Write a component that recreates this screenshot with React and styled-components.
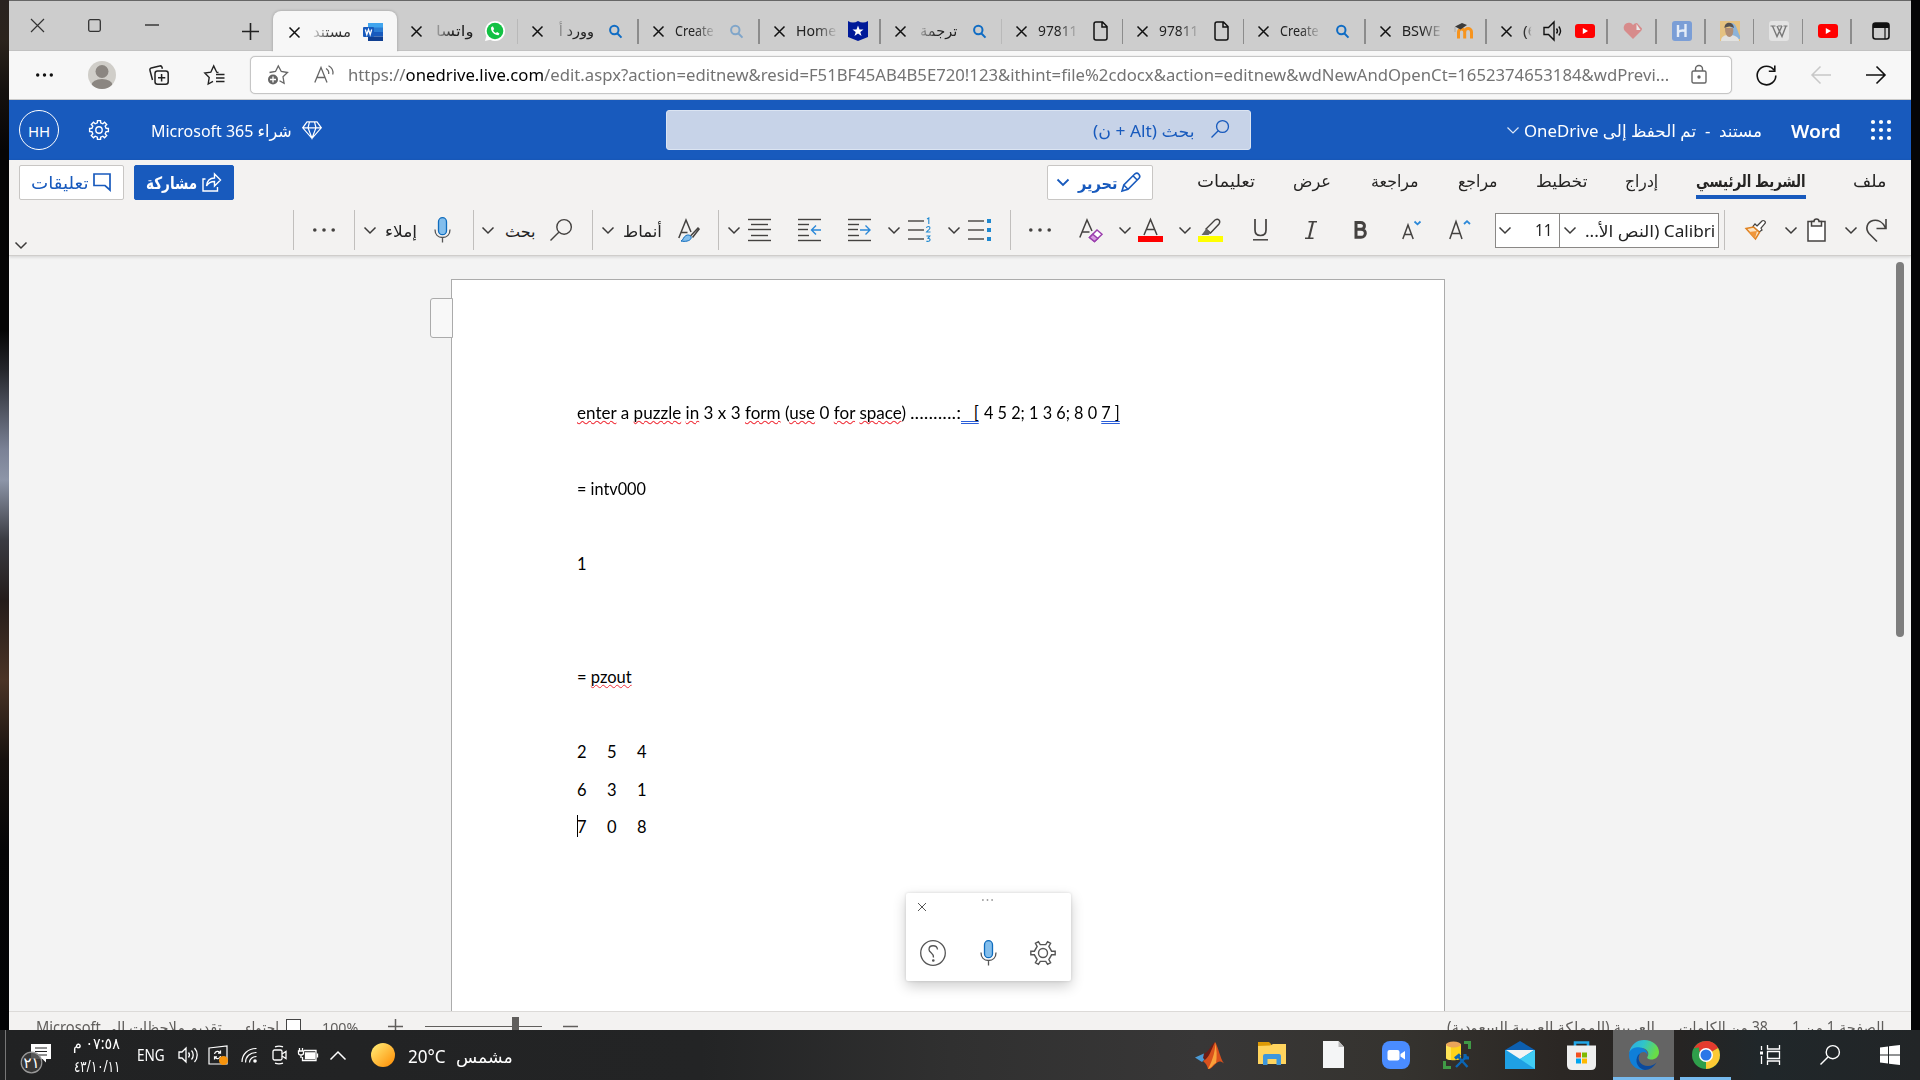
import React, { useLayoutEffect, useRef, useState } from "react";
import styled, { createGlobalStyle, css } from "styled-components";

const UI = `"Noto Sans", "Open Sans", "DejaVu Sans", sans-serif`;
const BLUE = "#185abd";

const Global = createGlobalStyle`
  * { box-sizing: border-box; }
  html, body { margin: 0; padding: 0; background: #000; overflow: hidden; }
  body { width: 1920px; height: 1080px; font-family: ${UI}; font-size: 15px; color: #222; }
`;

/* ---------- text that condenses to its column ---------- */
const FitBox = styled.span`
  display: block;
  flex: none;
  direction: ltr;
  text-align: left;
  width: ${(p) => p.$w}px;
  margin-left: ${(p) => p.$g || 0}px;
  margin-top: ${(p) => p.$dy || 0}px;
  height: ${(p) => p.$s * 1.5}px;
  line-height: ${(p) => p.$s * 1.5}px;
  font-size: ${(p) => p.$s}px;
  font-weight: ${(p) => p.$b || 400};
  font-family: ${(p) => p.$f || UI};
  color: ${(p) => p.$c || "inherit"};
  white-space: pre;
`;
const FitInner = styled.span`
  display: inline-block;
  transform-origin: 0 50%;
`;
function Fit({ w, g, dy, s = 15, b, c, f, rtl, children }) {
  const ref = useRef(null);
  const [k, setK] = useState(1);
  useLayoutEffect(() => {
    if (ref.current) setK(w / ref.current.offsetWidth);
  }, [w]);
  return (
    <FitBox $w={w} $g={g} $dy={dy} $s={s} $b={b} $c={c} $f={f}>
      <FitInner ref={ref} dir={rtl ? "rtl" : "ltr"} style={{ transform: `scaleX(${k})` }}>{children}</FitInner>
    </FitBox>
  );
}

/* ---------- icons ---------- */
const Svg = styled.svg`
  display: block;
  flex: none;
  overflow: visible;
  margin-left: ${(p) => p.$g || 0}px;
  margin-top: ${(p) => p.$dy || 0}px;
  opacity: ${(p) => p.$o || 1};
`;
const Ic = ({ w, h, g, dy, o, c = "#222", sw = 1.4, children }) => (
  <Svg width={w} height={h} viewBox={`0 0 ${w} ${h}`} $g={g} $dy={dy} $o={o} fill="none" stroke={c} strokeWidth={sw}>
    {children}
  </Svg>
);
const gear = (cx, cy, n, ro, ri, a = 0.3, off = 0) => {
  let d = "";
  for (let i = 0; i < n; i++) {
    const t = (i / n) * Math.PI * 2 + off;
    const st = (Math.PI * 2) / n;
    [[-a * 0.8, ro], [a * 0.8, ro], [a * 1.15, ri], [1 - a * 1.15, ri]].forEach(([f, r]) => {
      const q = t + f * st * 0.85 + (f > 0.5 ? st * 0.15 : 0);
      d += `${d ? "L" : "M"}${(cx + r * Math.cos(q)).toFixed(2)} ${(cy + r * Math.sin(q)).toFixed(2)}`;
    });
  }
  return d + "Z";
};
const Cross = (p) => <Ic w={11} h={11} sw={1.5} c="#111" {...p}><path d="M.5.5l10 10M10.500.5l-10 10" /></Ic>;
const Chev = (p) => <Ic w={12} h={7} c="#3b3a39" sw={1.5} {...p}><path d="M.5.5L6 6l5.500-5.500" /></Ic>;
const Dots = ({ n = 22, r = 1.8, ...p }) => (
  <Ic w={n} h={4} {...p}><g fill={p.c || "#333"} stroke="none"><circle cx={r} cy="2" r={r} /><circle cx={n / 2} cy="2" r={r} /><circle cx={n - r} cy="2" r={r} /></g></Ic>
);
const Lens = (p) => <Ic w={13} h={13} c="#0f6cc4" sw={2} {...p}><circle cx="5.300" cy="5" r="4.200" /><path d="M8.200 8.200L12.500 12.600" /></Ic>;
const Find = ({ k = 20, ...p }) => (
  <Ic w={k} h={k} {...p}><circle cx={k * 0.64} cy={k * 0.36} r={k * 0.33} /><path d={`M${k * 0.4} ${k * 0.6}L.5 ${k - 0.5}`} /></Ic>
);
const Mic = (p) => (
  <Ic w={17} h={26} c="#555" sw={1.3} {...p}>
    <rect x="4.500" y=".7" width="8" height="17" rx="4" fill="#83beec" stroke="#0f6cbd" />
    <path d="M1 12.500c0 5 3 8 7.500 8s7.500-3 7.500-8M8.500 20.500v5" />
  </Ic>
);
const YT = (p) => <Ic w={20} h={14} {...p}><rect width="20" height="14" rx="3" fill="#f00" stroke="none" /><path d="M7.800 4l5.200 3-5.200 3z" fill="#fff" stroke="none" /></Ic>;
const Doc = (p) => <Ic w={15} h={20} c="#111" sw={1.5} {...p}><path d="M1 3a2 2 0 012-2h6.500l4.500 4.500V17a2 2 0 01-2 2H3a2 2 0 01-2-2zM9 1v5h5" /></Ic>;
const WordIcon = (p) => (
  <Ic w={20} h={18} {...p}>
    <g stroke="none"><path d="M5 0h15v5H5z" fill="#41a5ee" /><path d="M5 4.500h15V9H5z" fill="#2b7cd3" /><path d="M5 9h15v4.500H5z" fill="#185abd" /><path d="M5 13.500h15V18H5z" fill="#103f91" /><rect y="4" width="11" height="10" rx="1" fill="#185abd" /></g>
    <path d="M2.300 6.500l1.500 5 1.700-5 1.700 5 1.500-5" stroke="#fff" strokeWidth="1.300" />
  </Ic>
);
const WhatsApp = (p) => (
  <Ic w={20} h={20} {...p}>
    <path d="M0 20l1.400-5A10 10 0 1110 20a9.500 9.500 0 01-4.800-1.200z" fill="#fff" stroke="none" />
    <circle cx="10" cy="10" r="8.300" fill="#12c143" stroke="none" />
    <path d="M6 7c0 4 3.500 7 7.500 7.300l1-1.800-2.400-1.400-1.200 1c-1.300-.6-2.200-1.500-2.700-2.800l1-1.200L8 5.500c-1.200 0-2 .6-2 1.500z" fill="#fff" stroke="none" />
  </Ic>
);
const Shield = (p) => (
  <Ic w={20} h={20} {...p}><path d="M0 0q5 3 10 0 5 3 10 0v16l-10 4-10-4z" fill="#001a99" stroke="none" /><path d="M10 4.500l1.500 4h4l-3.200 2.500 1.200 4-3.500-2.400L6.500 15l1.200-4L4.500 8.500h4z" fill="#fff" stroke="none" /></Ic>
);
const Moodle = (p) => (
  <Ic w={20} h={16} {...p}><path d="M4.500 15.500V9a3 3 0 016.200 0v6.500M10.700 9a3.300 3.300 0 016.800 0v6.500" stroke="#f7941e" strokeWidth="3" /><path d="M1 3.500L8 0l5 2-6.500 4.500z" fill="#3a3a3a" stroke="none" /><path d="M1 4v5" stroke="#aaa" strokeWidth="1" /></Ic>
);

/* ---------- frame ---------- */
const Screen = styled.div`
  width: 1920px; height: 1080px; display: flex; flex-direction: column; overflow: hidden;
`;
const Stage = styled.div`display: flex; height: 1030px; flex: none;`;
const Strip = styled.div`
  width: 9px; flex: none;
  background: ${(p) => p.$right
    ? "#050506"
    : "linear-gradient(#2a2320 0, #2b231c 40px, #15110e 90px, #060505 150px, #050505 330px, #25272c 370px, #7b8296 450px, #8d95a8 480px, #3a3b42 540px, #241c1a 600px, #4b3426 680px, #17110e 760px, #050506 850px, #020305 1030px)"};
`;
const Win = styled.main`width: 1902px; flex: none; display: flex; flex-direction: column; background: #f3f3f3;`;

/* ---------- browser chrome ---------- */
const TabBar = styled.div`
  height: 51px; flex: none; display: flex; align-items: center;
  padding-top: 11px; background: #cdcdcd; border-top: 1px solid #666; border-bottom: 1px solid #c2c2c2;
`;
const Tab = styled.div`
  flex: none; height: 40px; display: flex; align-items: center; position: relative;
  width: ${(p) => p.$w || 121.15}px;
  padding-left: ${(p) => (p.$pl === undefined ? 14 : p.$pl)}px;
  ${(p) => p.$active
    ? css`margin-left: 14px; margin-right: -0.5px; margin-bottom: -1px; height: 41px; background: #f7f7f7; border-radius: 8px 8px 0 0; box-shadow: 0 0 3px rgba(0,0,0,.25); clip-path: inset(-4px -4px 0 -4px);`
    : css`&::after { content: ""; position: absolute; right: 0; top: 8px; height: 25px; width: ${p.$thin ? 1 : 1.6}px; background: ${p.$thin ? "#b9b9b9" : "#8c8c8c"}; }`}
`;
const Fade = styled.div`
  width: ${(p) => p.$w || 40}px; margin-left: 11px; flex: none; height: 28px; display: flex; align-items: center;
  justify-content: ${(p) => (p.$rtl ? "flex-end" : "flex-start")};
  -webkit-mask-image: linear-gradient(to ${(p) => (p.$rtl ? "left" : "right")}, #000 ${(p) => p.$from || "50%"}, transparent ${(p) => p.$to || "105%"});
  mask-image: linear-gradient(to ${(p) => (p.$rtl ? "left" : "right")}, #000 ${(p) => p.$from || "50%"}, transparent ${(p) => p.$to || "105%"});
`;
const FavSlot = styled.div`width: 22px; margin-left: 11px; flex: none; display: flex; justify-content: center;`;
const AddressRow = styled.div`
  height: 49px; flex: none; display: flex; align-items: center; background: #f7f7f7; border-bottom: 1px solid #c9c9c9;
`;
const AddressBox = styled.div`
  width: 1482px; height: 38px; margin-left: 25px; flex: none; display: flex; align-items: center;
  background: #fff; border: 1px solid #c6c6c6; border-radius: 5px; box-shadow: 0 0 1px #bbb;
`;
const Avatar = styled.div`
  width: 28px; height: 28px; margin-left: 35px; border-radius: 50%; background: #d0cec9; overflow: hidden; flex: none;
`;
const Host = styled.span`color: #000;`;

function BrowserTab({ label, w, rtl, icon, thin, active }) {
  return (
    <Tab $active={active} $w={active ? 124 : undefined} $pl={active ? 16 : undefined} $thin={thin}>
      <Cross dy={1} />
      <Fade $rtl={rtl}><Fit w={w} s={14.5} rtl={rtl} c={active ? "#333" : "#222"} dy={rtl ? 0 : -1}>{label}</Fit></Fade>
      <FavSlot>{icon}</FavSlot>
    </Tab>
  );
}
const tabs = [
  { label: "واتسا", w: 37, rtl: true, icon: <WhatsApp />, thin: true },
  { label: "وورد أ", w: 35, rtl: true, icon: <Lens /> },
  { label: "Create", w: 39, icon: <Lens o={0.4} /> },
  { label: "Home", w: 40, icon: <Shield /> },
  { label: "ترجمة", w: 37, rtl: true, icon: <Lens />, thin: true },
  { label: "97811", w: 39, icon: <Doc /> },
  { label: "97811", w: 39, icon: <Doc /> },
  { label: "Create", w: 39, icon: <Lens /> },
  { label: "BSWE", w: 39, icon: <Moodle /> },
];

function Browser() {
  return (
    <>
      <TabBar>
        <Ic g={22} dy={-11} w={13} h={13} c="#333" sw={1.2}><path d="M0 0l13 13M13 0L0 13" /></Ic>
        <Ic g={44} dy={-11} w={13} h={13} c="#333" sw={1.3}><rect x=".7" y=".7" width="11.600" height="11.600" rx="1.500" /></Ic>
        <Ic g={44} dy={-11} w={14} h={13} c="#222" sw={1.3}><path d="M0 6h14" /></Ic>
        <Ic g={83} w={17} h={17} c="#222" sw={1.6}><path d="M0 8.500h17M8.500 0v17" /></Ic>
        <BrowserTab active label="مستند" w={38} rtl icon={<WordIcon />} />
        {tabs.map((t, i) => <BrowserTab key={i} {...t} />)}
        <Tab $w={121.15}>
          <Cross dy={1} />
          <Fade $w={14} $from="25%" $to="62%"><Fit w={14} s={14.5} dy={-1} c="#333">(6</Fit></Fade>
          <Ic g={6} w={20} h={20} c="#111" sw={1.4}><path d="M1 6.500h4.500L11 1v18l-5.500-5.500H1zM13.500 7.500c1.200 1.500 1.200 3.500 0 5M15.800 5.500c2 2.600 2 6.400 0 9" /></Ic>
          <YT g={12} />
        </Tab>
        <Tab $w={48.8} $pl={15}><Ic w={20} h={18} o={0.55}><path d="M10 17L1.500 8.500A5 5 0 1110 3a5 5 0 014-2l5 5.500q0 1.500-1 2.500z" fill="#e05656" stroke="none" /><path d="M13.500 2v6h4z" fill="#fff" stroke="none" /></Ic></Tab>
        <Tab $w={48.8} $pl={15}><Ic w={20} h={20}><rect width="20" height="20" rx="3" fill="#7b9ed6" stroke="none" /><path d="M6 4v12M13.500 3v13M6 11c3-2 5-2 7.500-1" stroke="#e4ecf7" strokeWidth="2.400" /></Ic></Tab>
        <Tab $w={48.8} $pl={14}><Ic w={20} h={20}><g stroke="none"><rect width="20" height="20" fill="#e5c281" /><path d="M11 2c6 0 6 8 9 13v3H10z" fill="#8cb3d8" /><path d="M1 20c0-5 4-6 8-6s10 1 10 6z" fill="#e2e2e0" /><path d="M5 7c0 6 2 9 4.500 9S14 12 13 7z" fill="#b18f76" /><path d="M4.500 7c0-7 9-7 9.500 0-3-2-6-2-9.500 0z" fill="#555250" /></g></Ic></Tab>
        <Tab $w={48.8} $pl={14.5}><Ic w={20} h={20}><rect width="20" height="20" rx="3" fill="#e3e3e3" stroke="none" /><path d="M1.500 5h5M9 5h4M14.500 5h4" stroke="#777" strokeWidth="1" /><path d="M3.500 5l4.500 10.500 5-10.500M8 5l5 10.500 4-10.500" stroke="#777" strokeWidth="1.400" /></Ic></Tab>
        <Tab $w={48.8} $pl={14.5}><YT /></Tab>
        <Ic g={20} w={18} h={18} c="#111" sw={1.6}><rect x="1" y="1" width="16" height="16" rx="2.500" /><path d="M1 3.500h16" strokeWidth="5" /><path d="M13 5v12" strokeWidth="1.200" /></Ic>
      </TabBar>
      <AddressRow>
        <Dots g={27} n={17} r={1.7} c="#111" />
        <Avatar><Ic w={28} h={28}><g fill="#8b8681" stroke="none"><circle cx="14" cy="10.500" r="6.500" /><ellipse cx="14" cy="24" rx="10.500" ry="6" /></g></Ic></Avatar>
        <Ic g={33} w={20} h={20} c="#222" sw={1.5}><rect x="6" y="6" width="13.200" height="13.200" rx="2.500" /><path d="M12.600 9v7.400M9 12.700h7.300M3.500 15L1 5.500a2 2 0 011.300-2.600L10.500 1a2 2 0 012.500 1.300l.4 1.500" /></Ic>
        <Ic g={35} w={21} h={20} c="#222" sw={1.4}><path d="M14.500 7.500l-1.800-.3L9.700 1 6.800 7.200.8 8.100l4.400 4.500-1 6.400L9 16.300M12 9.500h8.500M12 13h8.500M12 16.500h8.500" /></Ic>
        <AddressBox>
          <Ic g={16} w={22} h={20} c="#666" sw={1.3}><path d="M2.500 7.500l6-1L11.300 1l3 5.500 6.200 1-4.500 4.300 1.100 6.500-4.600-2.500" /><circle cx="6" cy="14.500" r="5" fill="#666" stroke="none" /><path d="M6 11.500v6M3 14.500h6" stroke="#fff" /></Ic>
          <Ic g={25} w={20} h={18} dy={-2} c="#666" sw={1.3}><path d="M.8 17.500L7 2.500l6 15M3 12.500h8M12 3.500c2 1.200 3 3.200 2.700 5.500M14.500.8c3.300 1.800 5 5 4.300 8.700" /></Ic>
          <Fit g={14} w={1321} s={17} dy={-1} c="#737373">https://<Host>onedrive.live.com</Host>/edit.aspx?action=editnew&amp;resid=F51BF45AB4B5E720!123&amp;ithint=file%2cdocx&amp;action=editnew&amp;wdNewAndOpenCt=1652374653184&amp;wdPrevi...</Fit>
          <Ic g={22} w={16} h={19} dy={-2} c="#666" sw={1.4}><rect x="1" y="6" width="14" height="12" rx="1.500" /><path d="M4.500 6V4a3.500 3.500 0 017 0v2" /><circle cx="8" cy="12" r="1" fill="#666" /></Ic>
        </AddressBox>
        <Ic g={24} w={21} h={21} c="#111" sw={1.6}><path d="M19.800 10.500A9.300 9.300 0 1118 5M18.800.5v5.800h-6" /></Ic>
        <Ic g={34} w={20} h={18} c="#c8c8c8" sw={1.5}><path d="M20 9H1M9.500.5L1 9l8.500 8.500" /></Ic>
        <Ic g={35} w={20} h={18} c="#111" sw={1.6}><path d="M0 9h19M10.500.5L19 9l-8.500 8.500" /></Ic>
      </AddressRow>
    </>
  );
}

/* ---------- Word header ---------- */
const Header = styled.header`height: 60px; flex: none; display: flex; align-items: center; background: ${BLUE}; color: #fff;`;
const Initials = styled.div`
  width: 40px; height: 40px; margin-left: 10px; flex: none; border: 1px solid #fff; border-radius: 50%;
  display: flex; align-items: center; justify-content: center; padding-top: 3px;
`;
const SearchBox = styled.div`
  width: 585px; height: 40px; margin-left: 344px; flex: none; display: flex; align-items: center;
  background: #c7d3e8; border: 1px solid #dbe4f2; border-radius: 3px; color: ${BLUE};
`;
function WordHeader() {
  return (
    <Header>
      <Initials><Fit w={22} s={15}>HH</Fit></Initials>
      <Ic g={30} w={20} h={20} c="#fff" sw={1.4}><path d={gear(10, 10, 8, 9.5, 7.3)} /><circle cx="10" cy="10" r="3.200" /></Ic>
      <Fit g={42} w={141} s={17} dy={2} rtl>شراء Microsoft 365</Fit>
      <Ic g={10} w={20} h={18} c="#fff" sw={1.2}><path d="M5 .8h10l4.300 6L10 17.300.7 6.800zM.7 6.800h18.600M7.500.8L6 6.800l4 10.500 4-10.500-1.500-6" /></Ic>
      <SearchBox>
        <Fit g={426} w={102} s={16} dy={2} rtl>بحث (Alt + ن)</Fit>
        <Find k={18} g={16} dy={-2} c={BLUE} sw={1.3} />
      </SearchBox>
      <Chev g={256} w={10} h={6} c="#dfe8f6" sw={1.2} />
      <Fit g={7} w={238} s={16.5} dy={2} rtl>{"مستند  -  تم الحفظ إلى OneDrive"}</Fit>
      <Fit g={29} w={50} s={18.5} dy={2} b={600}>Word</Fit>
      <Ic g={30} w={20} h={20}><g fill="#fff" stroke="none">{[2, 10, 18].map((x) => [2, 10, 18].map((y) => <circle key={x + "-" + y} cx={x} cy={y} r="2.100" />))}</g></Ic>
    </Header>
  );
}

/* ---------- ribbon ---------- */
const Ribbon = styled.section`height: 96px; flex: none; background: #f3f2f1; border-bottom: 1px solid #cfcdcb; box-shadow: 0 1px 3px rgba(0,0,0,.14); position: relative; z-index: 1;`;
const RibbonTabs = styled.nav`height: 45px; display: flex; align-items: center;`;
const Commands = styled.div`height: 50px; display: flex; align-items: center;`;
const PillButton = styled.button`
  height: 35px; width: ${(p) => p.$w}px; margin-left: ${(p) => p.$g}px; padding: 0 0 0 ${(p) => p.$pl}px; flex: none;
  display: flex; align-items: center; border-radius: 2px;
  border: 1px solid ${(p) => (p.$solid ? BLUE : "#c8c6c4")};
  background: ${(p) => (p.$solid ? BLUE : "#fff")};
  color: ${(p) => (p.$solid ? "#fff" : BLUE)};
`;
const RibbonTab = styled.div`
  position: relative; flex: none; margin-left: ${(p) => p.$g}px; height: 45px; display: flex; align-items: center; color: #252423;
  ${(p) => p.$on && css`&::after { content: ""; position: absolute; left: 0; right: 0; top: 35px; height: 4px; background: ${BLUE}; }`}
`;
const Sep = styled.i`width: 1px; height: 40px; flex: none; background: #c1bfbd; margin-left: ${(p) => p.$g}px;`;
const FontBox = styled.div`
  display: flex; align-items: center; height: 35px; flex: none; background: #fff; border: 1px solid #8a8886;
  width: ${(p) => p.$w}px; margin-left: ${(p) => p.$g}px;
`;
const RTABS = [
  ["تعليمات", 44, 58], ["عرض", 38, 38], ["مراجعة", 40, 48], ["مراجع", 39, 40], ["تخطيط", 38, 51], ["إدراج", 38, 33],
];
const G = "#444240";
const Lines = ({ rows, ...p }) => <Ic w={23} h={22} c={G} sw={1.4} {...p}>{rows.map(([a, b, y], i) => <path key={i} d={`M${a} ${y}H${b}`} />)}{p.children}</Ic>;

function WordRibbon() {
  return (
    <Ribbon>
      <RibbonTabs>
        <PillButton $w={105} $g={10} $pl={11}>
          <Fit w={57} s={17} rtl b={500}>تعليقات</Fit>
          <Ic g={5} w={18} h={18} dy={-1} c={BLUE} sw={1.7}><path d="M1 1h16v16l-5-4.500H1z" /></Ic>
        </PillButton>
        <PillButton $w={100} $g={10} $pl={11} $solid>
          <Fit w={51} s={17} dy={1} rtl b={700}>مشاركة</Fit>
          <Ic g={5} w={19} h={20} dy={-2} c="#fff" sw={1.4}><path d="M3.500 7H1v12h14.500v-4M4.500 14c.5-5 3.500-8 8-8V2l6 6-6 6V9.500c-3.500 0-6 1-8 4.500z" /></Ic>
        </PillButton>
        <PillButton $w={106} $g={813} $pl={9}>
          <Chev c={BLUE} sw={1.8} />
          <Fit g={9} w={39} s={16} rtl b={700}>تحرير</Fit>
          <Ic g={4} w={20} h={20} dy={-2} c={BLUE} sw={1.6}><path d="M1 19l1.800-6L14 1.800q2-1.500 3.800.4t.4 3.800L7 17.200zM12 3.800l4.200 4.200M2.800 13L7 17.200" /></Ic>
        </PillButton>
        {RTABS.map(([t, g, w]) => <RibbonTab key={t} $g={g}><Fit w={w} s={16.5} rtl dy={-2}>{t}</Fit></RibbonTab>)}
        <RibbonTab $g={38} $on><Fit w={110} s={16.5} rtl b={700} dy={-2}>الشريط الرئيسي</Fit></RibbonTab>
        <RibbonTab $g={47}><Fit w={33} s={16.5} rtl dy={-2}>ملف</Fit></RibbonTab>
      </RibbonTabs>
      <Commands>
        <Chev g={6} dy={31} />
        <Sep $g={266} />
        <Dots g={19} n={22} c={G} /><Sep $g={19} />
        <Chev g={9} /><Fit g={9} w={32} s={16} dy={1} rtl>إملاء</Fit><Mic g={17} />
        <Sep $g={22} />
        <Chev g={8} /><Fit g={11} w={31} s={16} dy={1} rtl>بحث</Fit><Find k={22} g={14} c={G} sw={1.4} />
        <Sep $g={20} />
        <Chev g={9} /><Fit g={9} w={39} s={16} dy={1} rtl>أنماط</Fit>
        <Ic g={16} w={22} h={23} c={G} sw={1.5}><path d="M.8 19L8 1l5 12M3 13.500h6.500" /><path d="M20.500 8.500l-8 8.500M21.500 9.500l-7 9" /><path d="M3 22c2 0 2-4 5-5.500s6 .5 5 3-6 3.500-10 2.500z" fill="#83beec" stroke="#0f6cbd" strokeWidth="1" /></Ic>
        <Sep $g={18} />
        <Chev g={9} />
        <Lines g={8} rows={[[0, 23, 0.5], [3, 20, 5.5], [0, 23, 10.500], [3, 20, 16.500], [0, 23, 21.500]]} />
        <Lines g={27} rows={[[0, 23, 0.5], [0, 11, 5.5], [0, 10, 10.500], [0, 11, 16.500], [0, 23, 21.500]]}><path d="M23 11H14M18 6.500L13.500 11l4.500 4.500" stroke="#2b88d8" /></Lines>
        <Lines g={27} rows={[[0, 23, 0.5], [0, 11, 5.5], [0, 10, 10.500], [0, 11, 16.500], [0, 23, 21.500]]}><path d="M12 11h10M17.500 6.500L22 11l-4.500 4.500" stroke="#2b88d8" /></Lines>
        <Chev g={17} />
        <Lines g={8} rows={[[0, 16, 2], [0, 16, 11], [0, 16, 20]]}><g stroke="#1e88d0" strokeWidth="1.100"><path d="M19 0l1.800-1v6" /><path d="M18.500 9c.3-2 3.500-2 3.500 0 0 1.500-3 3-3.500 4h4" /><path d="M18.500 17h3.300l-1.800 2.300c3 0 3 3.700-1.700 3" /></g></Lines>
        <Chev g={17} />
        <Lines g={8} rows={[[0, 16, 2], [0, 16, 11], [0, 16, 20]]}><path d="M19 2h4M19 11h4M19 20h4" stroke="#1e88d0" strokeWidth="4" /></Lines>
        <Sep $g={19} />
        <Dots g={18} n={22} c={G} />
        <Ic g={28} w={24} h={23} c={G} sw={1.5}><path d="M.8 18.500L8 1l5 11M3 13h7.500" /><path d="M10.500 18.500l7.500-7.500 5 4.300-7.500 7.200z" stroke="#9b3fae" fill="#fff" /><path d="M10.500 18.500l3.300-3.300 5 4.300-3.300 3z" fill="#d59ade" stroke="#9b3fae" /></Ic>
        <Chev g={16} />
        <Ic g={7} w={25} h={24} c={G} sw={1.5}><path d="M6 17L12.500 1.500 19 17M8.500 11.500h8" /><path d="M0 21h25" stroke="#f00" strokeWidth="6" /></Ic>
        <Chev g={16} />
        <Ic g={7} w={25} h={24} c={G} sw={1.4}><path d="M8 11l9-9q2.500-1.500 4 0t0 4l-8.500 9L8 11z" /><path d="M3.500 17l4.800-6.300 4.200 4.200-2 2.100z" fill="#666" stroke="none" /><path d="M0 21h25" stroke="#ff0" strokeWidth="6" /></Ic>
        <Ic g={30} w={15} h={22} c={G} sw={1.7}><path d="M2 0v11c0 3.500 2 5.500 5.500 5.500S13 14.500 13 11V0" /><path d="M0 20.800h15" strokeWidth="1.500" /></Ic>
        <Ic g={37} w={12} h={18} dy={-1} c={G} sw={1.4}><path d="M3.500.7h8.500M0 17.300h8.500" /><path d="M8 1L4 17" strokeWidth="2" /></Ic>
        <Ic g={37} w={13} h={18} dy={-1} c={G} sw={3}><path d="M2 1.600h4.500c5.500 0 5 6.700 0 6.700H2h5c6 0 5.500 8 0 8H2z" /></Ic>
        <Ic g={35} w={19} h={20} c={G} sw={1.5}><path d="M.8 19L6 5l5.200 14M2.500 14.500h7" /><path d="M12.500 1.500l3 2.800 3-2.800" stroke="#2b88d8" strokeWidth="1.800" /></Ic>
        <Ic g={28} w={22} h={20} c={G} sw={1.5}><path d="M.8 19L7 1.500 13 19M3 13.500h8" /><path d="M15 4l3-2.800L21 4" stroke="#2b88d8" strokeWidth="1.800" /></Ic>
        <FontBox $w={65} $g={24}><Chev g={3} /><Fit g={24} w={17} s={16}>11</Fit></FontBox>
        <FontBox $w={160} $g={-1}><Chev g={4} /><Fit g={9} w={130} s={16} dy={1} rtl>Calibri (النص الأ...</Fit></FontBox>
        <Sep $g={5} />
        <Ic g={20} w={22} h={20} c={G} sw={1.2}><path d="M12 6l5-5q1-1 2.500 0t.5 2.500l-4 4.500 1 2-3 2-6-5.500 2-2.500z" fill="#fff" /><path d="M1 8.500l7.500-1.500 6 5.500L10.500 19z" fill="#fbe3c3" stroke="#e08221" strokeWidth="1.500" /><path d="M4 12l8-1-2 7.500z" fill="#f0963a" stroke="none" /></Ic>
        <Chev g={18} />
        <Ic g={10} w={19} h={24} c={G} sw={1.5}><path d="M1 3.500h17v19.500H1z" fill="#fff" /><path d="M4.500 8V3.500H7a2.500 2.500 0 015 0h2.500V8z" fill="#f3f2f1" /></Ic>
        <Chev g={19} />
        <Ic g={9} w={21} h={23} c={G} sw={1.6}><path d="M20 0v9.500h-9.500M19.500 9C17 3 12 .5 7 1.500c-6 1.500-8 8-4 13l8 8" /></Ic>
      </Commands>
    </Ribbon>
  );
}

/* ---------- document ---------- */
const Canvas = styled.section`height: 755px; flex: none; display: flex; overflow: hidden; position: relative; background: #f3f3f3;`;
const Page = styled.article`
  width: 994px; height: 732px; margin: 23px 0 0 442px; flex: none; background: #fff; border: 1px solid #ababab; border-bottom: 0; padding: 115px 0 0 125px; position: relative;
`;
const Handle = styled.div`position: absolute; left: -22px; top: 18px; width: 23px; height: 40px; border: 1px solid #ababab; border-radius: 3px 0 0 3px; background: #f8f8f8;`;
const Para = styled.div`height: 37.6px; display: flex; align-items: center; color: #000;`;
const Num = styled.span`width: 30px; font: 16.500px Lato, sans-serif; flex: none;`;
const Caret = styled.i`position: absolute; left: 125px; top: 535px; width: 1px; height: 22px; background: #000;`;
const Bad = styled.span`text-decoration: underline wavy #f0303a 1px; text-underline-offset: 1px; text-decoration-skip-ink: none;`;
const Gram = styled.span`text-decoration: underline double #2b5fd9 1px; text-underline-offset: 2px; text-decoration-skip-ink: none;`;
const Scroll = styled.div`width: 8px; height: 375px; margin: 6px 0 0 451px; border-radius: 4px; background: #7d7d7d; flex: none;`;
const Popup = styled.aside`
  position: absolute; left: 897px; top: 637px; width: 165px; height: 88px; background: #fff; border-radius: 2px;
  box-shadow: 0 5px 14px rgba(0,0,0,.2), 0 0 3px rgba(0,0,0,.14); display: flex; flex-direction: column;
`;
const PopTop = styled.div`display: flex; height: 30px; padding-top: 5px; align-items: flex-start;`;
const PopRow = styled.div`display: flex; align-items: center; height: 58px; margin-top: 2px;`;
const LATO = "Lato, sans-serif";

function WordDocument() {
  const nums = (a) => a.map((n, i) => <Num key={i}>{n}</Num>);
  return (
    <Canvas>
      <Page>
        <Handle />
        <Para>
          <Fit w={329} s={16.5} f={LATO}><Bad>enter</Bad> a <Bad>puzzle</Bad> <Bad>in</Bad> 3 x 3 <Bad>form</Bad> (<Bad>use</Bad> 0 <Bad>for</Bad> <Bad>space</Bad>)</Fit>
          <Fit g={4} w={51} s={16.5} f={LATO}>..........:</Fit>
          <Fit w={18} s={16.5} f={LATO}><Gram>{"\u00a0\u00a0 ["}</Gram></Fit>
          <Fit g={5} w={136} s={16.5} f={LATO}>4 5 2; 1 3 6; 8 0 <Gram>7 ]</Gram></Fit>
        </Para>
        <Para /><Para><Fit w={69} s={16.5} f={LATO}>= intv000</Fit></Para>
        <Para /><Para>{nums([1])}</Para>
        <Para /><Para /><Para><Fit w={55} s={16.5} f={LATO}>= <Bad>pzout</Bad></Fit></Para>
        <Para /><Para>{nums([2, 5, 4])}</Para>
        <Para>{nums([6, 3, 1])}</Para>
        <Para>{nums([7, 0, 8])}</Para>
        <Caret />
      </Page>
      <Scroll />
      <Popup>
        <PopTop>
          <Ic g={12} dy={5} w={8} h={8} c="#555" sw={1}><path d="M0 0l8 8M8 0L0 8" /></Ic>
          <Dots g={56} n={11} r={0.9} c="#999" />
        </PopTop>
        <PopRow>
          <Ic g={14} w={26} h={26} c="#555" sw={1.3}><circle cx="13" cy="13" r="12.300" /><path d="M17.500 9.500C17 4.500 9 4.500 9 9.500c0 3.500 5 3.500 4.500 8" /><circle cx="13.300" cy="20.500" r=".7" /></Ic>
          <Mic g={34} w={17} />
          <Ic g={33} w={26} h={26} c="#555" sw={1.4}><path d={gear(13, 13, 6, 12.3, 8.8, 0.2)} /><circle cx="13" cy="13" r="4.500" /></Ic>
        </PopRow>
      </Popup>
    </Canvas>
  );
}

const StatusBar = styled.footer`
  height: 19px; flex: none; border-top: 1px solid #dcdad8; background: #f3f2f1; overflow: hidden; display: flex; align-items: flex-start; color: #605e5c;
`;
const Check = styled.i`width: 15px; height: 15px; border: 1px solid #444; background: #fff; flex: none; margin: 7px 0 0 7px;`;
const Zoom = styled.div`width: 117px; height: 18px; margin-left: 22px; flex: none; display: flex; align-items: flex-start;`;
const ZLine = styled.i`height: 1px; background: #605e5c; margin-top: 14px; width: ${(p) => p.$w}px;`;
const ZThumb = styled.i`width: 7px; height: 14px; margin-top: 5px; background: #605e5c;`;
function Status() {
  return (
    <StatusBar>
      <Fit g={27} w={186} s={15.5} dy={4} rtl>تقديم ملاحظات إلى Microsoft</Fit>
      <Fit g={23} w={34} s={15.5} dy={4} rtl>احتواء</Fit>
      <Check />
      <Fit g={21} w={36} s={15} dy={4}>100%</Fit>
      <Ic g={30} dy={7} w={15} h={15} c="#605e5c" sw={1.5}><path d="M0 7.500h15M7.500 0v15" /></Ic>
      <Zoom><ZLine $w={87} /><ZThumb /><ZLine $w={23} /></Zoom>
      <Ic g={21} dy={7} w={15} h={15} c="#605e5c" sw={1.5}><path d="M0 7.500h15" /></Ic>
      <Fit g={869} w={208} s={15.5} dy={4} rtl>العربية (المملكة العربية السعودية)</Fit>
      <Fit g={24} w={89} s={15.5} dy={4} rtl>38 من الكلمات</Fit>
      <Fit g={24} w={93} s={15.5} dy={4} rtl>الصفحة 1 من 1</Fit>
    </StatusBar>
  );
}

/* ---------- taskbar ---------- */
const Taskbar = styled.footer`
  height: 50px; flex: none; display: flex; align-items: center; color: #fff;
  background: linear-gradient(90deg, #212223 0, #232425 700px, #303030 950px, #383737 1200px, #35332f 1400px, #2b2724 1560px, #262423 1680px, #20272a 1760px, #222527 1920px);
`;
const ShowDesk = styled.i`width: 1px; height: 50px; margin-left: 5px; background: #777; flex: none;`;
const Clock = styled.div`margin-left: 21px; width: 48px; flex: none; display: flex; flex-direction: column; margin-top: -2px;`;
const Running = styled.div`
  width: ${(p) => p.$w}px; height: 50px; margin-left: ${(p) => p.$g}px; padding-left: ${(p) => p.$pl}px; flex: none; display: flex; align-items: center;
  background: ${(p) => (p.$on ? "#646464" : "transparent")}; border-bottom: 3px solid #76b9ed; padding-top: 2px;
`;
const W = "#fff";
function Tasks() {
  return (
    <Taskbar>
      <ShowDesk />
      <Ic g={15} dy={2} w={31} h={32} c={W} sw={1.2}><path d="M10 4h20v15h-5v3.500L21.500 19H10z" fill="#fff" stroke="none" /><path d="M14 8h12M14 11.500h12M16 15h10" stroke="#222" /><circle cx="10.500" cy="22.500" r="10.300" fill="#3a3a3a" fillOpacity=".85" stroke="#999" /><text x="10.500" y="28" textAnchor="middle" fontSize="15" fontFamily="DejaVu Sans" fill="#fff" stroke="none">٢١</text></Ic>
      <Clock>
        <Fit w={47} s={16} rtl>٠٧:٥٨ م</Fit>
        <Fit w={46} s={16} g={1} dy={-1}>٤٣/١٠/١١</Fit>
      </Clock>
      <Fit g={16} w={28} s={15.5} dy={2}>ENG</Fit>
      <Ic g={13} w={20} h={18} c={W} sw={1.3}><path d="M1 6h3l4-4v14l-4-4H1zM10.500 6.500c1.200 1.500 1.200 3.500 0 5M13.500 4.500c2.300 2.500 2.300 6.500 0 9M16.500 2c3.600 4 3.600 10 0 14" /></Ic>
      <Ic g={10} w={20} h={20} c={W} sw={1.2}><path d="M1 3L19 1v18H1zM6.500 9c.5-3 4.500-3.500 5.500-1M12.500 5.500v2.700H10M12.500 11c-.5 3-4.500 3.500-5.500 1M6.500 14.500v-2.700H9" /><circle cx="15.500" cy="15.500" r="4.500" fill="#f7940d" stroke="none" /></Ic>
      <Ic g={13} w={16} h={16} c={W} sw={1.2}><path d="M1 15C1 7 7 1.500 15.500 1.500M4.500 15.500c0-6 4.500-10 11-10M8.500 15.500c0-3.500 3-6 7-6" /><circle cx="14" cy="14" r="1.800" fill="#fff" stroke="none" /></Ic>
      <Ic g={15} w={15} h={20} c={W} sw={1.3}><rect x="1" y="5" width="9" height="10" rx="1.500" /><path d="M10 9l4-2.500v7L10 11M3 1.800q4-1.500 8 0M3 18.200q4 1.500 8 0" /></Ic>
      <Ic g={11} w={20} h={14} c={W} sw={1.3}><path d="M6 2.500h12v10H4.500V9" /><path d="M7.500 5h9v5.500h-9z" fill="#fff" /><path d="M19.500 5.500v4M1.500 0v3M4.500 0v3M.5 3h5v2q0 2-2.500 2T.5 5zM3 7v3" /></Ic>
      <Ic g={12} w={16} h={9} c={W} sw={1.5}><path d="M.5 8.500L8 1l7.500 7.500" /></Ic>
      <Ic g={25} w={24} h={24} dy={0}><defs><linearGradient id="sun" x1="0" y1="0" x2="1" y2="1"><stop offset=".15" stopColor="#ffe169" /><stop offset="1" stopColor="#ff8a00" /></linearGradient></defs><circle cx="12" cy="12" r="12" fill="url(#sun)" stroke="none" /></Ic>
      <Fit g={13} w={38} s={17.5} dy={2}>20°C</Fit>
      <Fit g={10} w={57} s={17} dy={3} rtl>مشمس</Fit>

      <Ic g={682} w={29} h={27}><g stroke="none"><path d="M0 15.500l9-4 3.500 3L7 20z" fill="#4c9bd6" /><path d="M9 11.500C13 11 16 3 20 0c-1 8-6 15-9 19l-3-3z" fill="#6b1d16" /><path d="M20 0c3 4 5 16 9 21.500-4-3-5.500-2-8 0s-5 6-8 5.500C12 22 9 20 8 19c6-2 9-13 12-19z" fill="#d8511d" /><path d="M20 0c1 6-2 18-7 27 4-1 5-5 8-6 1-6 1-14-1-21z" fill="#f9a13a" /></g></Ic>
      <Ic g={34} w={28} h={24} dy={-2}><g stroke="none"><path d="M0 0h11l2 2v3H0z" fill="#dd9a06" /><path d="M0 4l12-.5L15 2h13v20H0z" fill="#ffd45e" /><path d="M5 23v-9q0-2 2-2h14q2 0 2 2v9h-4.500v-6h-9v6z" fill="#3e97dc" /></g></Ic>
      <Ic g={37} w={21} h={27} dy={-1}><path d="M0 0h15.500l5.500 6v21H0z" fill="#f4f5f6" stroke="none" /><path d="M15.500 0v6H21z" fill="#bbb" stroke="none" /></Ic>
      <Ic g={38} w={28} h={28}><rect width="28" height="28" rx="8" fill="#4a8cff" stroke="none" /><rect x="5.500" y="9" width="12" height="10.500" rx="2" fill="#fff" stroke="none" /><path d="M18.500 13l4.500-3v8.500l-4.500-3z" fill="#fff" stroke="none" /></Ic>
      <Ic g={33} w={28} h={28}><g stroke="none"><path d="M3 3v14c0 3 15 3 15 0V3z" fill="#fdd31c" /><path d="M3 3v14q1 2 5 2V3z" fill="#fff07e" opacity=".6" /><ellipse cx="10.500" cy="3.500" rx="7.500" ry="3" fill="#eaa55a" /></g><path d="M21 1.500h5.500V8M1.500 20v6.500H8" stroke="#409a46" strokeWidth="3" /><path d="M13 26l11-11M24.500 26L15 15.500" stroke="#0b66b5" strokeWidth="2.400" /><path d="M12 17.500l5-4M22 13v4h4" stroke="#0b66b5" strokeWidth="3" /></Ic>
      <Ic g={34} w={30} h={28}><g stroke="none"><path d="M0 9L15 0l15 9v3H0z" fill="#0c5fb0" /><path d="M0 9h30v19H0z" fill="#1fa0e4" /><path d="M1 9h28l-14 9z" fill="#f4f4f4" /><path d="M30 9v19L15 18z" fill="#41cdf5" /></g></Ic>
      <Ic g={32} w={29} h={29} dy={1}><path d="M8 6V1.500h13V6" stroke="#22a7e8" strokeWidth="2.600" /><path d="M0 4.500h29V24q0 5-5 5H5q-5 0-5-5z" fill="#efefef" stroke="none" /><g stroke="none"><path d="M9 11.500h5v5H9z" fill="#f25022" /><path d="M15 11.500h5v5h-5z" fill="#7fba00" /><path d="M9 17.500h5v5H9z" fill="#00a4ef" /><path d="M15 17.500h5v5h-5z" fill="#ffb900" /></g></Ic>
      <Running $w={61} $g={17} $pl={16} $on>
        <Ic w={30} h={30}>
          <defs><linearGradient id="eg" x1="0" y1="0" x2="1" y2=".3"><stop offset="0" stopColor="#2aa9e8" /><stop offset=".5" stopColor="#31c4c9" /><stop offset="1" stopColor="#69dc46" /></linearGradient></defs>
          <g stroke="none">
            <path d="M.3 12C2 4.500 8 0 15 0c9 0 15 6 15 12 0 5-4 7.500-7.500 7.500-3 0-5-1.200-4-2.800C21 13 18 8 12 8 7 8 3 10 .3 12z" fill="url(#eg)" />
            <path d="M.3 12C3 7.500 8 7 11 7.500c5 .5 8 4 7.500 8-.3-2.300-2-3.500-4-3.500-3 0-5 3-5 6 0 5 4 9 7 11.800C7 31 0 24 0 15z" fill="#0f7fd8" />
            <path d="M11 13.500C7 20 12 26 19 26c4 0 6-1.500 8.500-3.500C25 27 20.500 30 16 30 10 29 7 24 7.500 19.500 8 16 9.500 14.500 11 13.500z" fill="#0c4a9c" />
          </g>
        </Ic>
      </Running>
      <Running $w={51} $g={6} $pl={12}>
        <Ic w={28} h={28}>
          <g stroke="none"><circle cx="14" cy="14" r="14" fill="#2f9e4b" /><path d="M14 14L1.900 7A14 14 0 0126.100 7z" fill="#e33b2e" /><path d="M14 14L26.100 7a14 14 0 01-12.100 21z" fill="#fcc934" /><path d="M14 7h12.100A14 14 0 0014 0z" fill="#e33b2e" /><path d="M7.900 17.500L1.900 7l5-.5z" fill="#2f9e4b" /><circle cx="14" cy="14" r="7" fill="#fff" /><circle cx="14" cy="14" r="5.500" fill="#2b77e8" /></g>
        </Ic>
      </Running>
      <Ic g={29} dy={-1} w={20} h={20} c={W} sw={1.3}><path d="M1.500 1v4M1.500 11v8M7.500 0v4h12V0M7.500 20v-4h12v4M7.500 6.500h12v7h-12z" /><path d="M0 8h3" strokeWidth="3" /></Ic>
      <Find k={20} g={40} dy={-1} c={W} sw={1.4} />
      <Ic g={40} dy={-1} w={20} h={20}><path d="M0 2.500l8-1.100V9.500H0zM9 1.300L20 0v9.500H9zM0 10.500h8v8.100l-8-1.100zM9 10.500h11V20L9 18.700z" fill="#fff" stroke="none" /></Ic>
    </Taskbar>
  );
}

export default function App() {
  return (
    <Screen>
      <Global />
      <Stage>
        <Strip />
        <Win>
          <Browser />
          <WordHeader />
          <WordRibbon />
          <WordDocument />
          <Status />
        </Win>
        <Strip $right />
      </Stage>
      <Tasks />
    </Screen>
  );
}
